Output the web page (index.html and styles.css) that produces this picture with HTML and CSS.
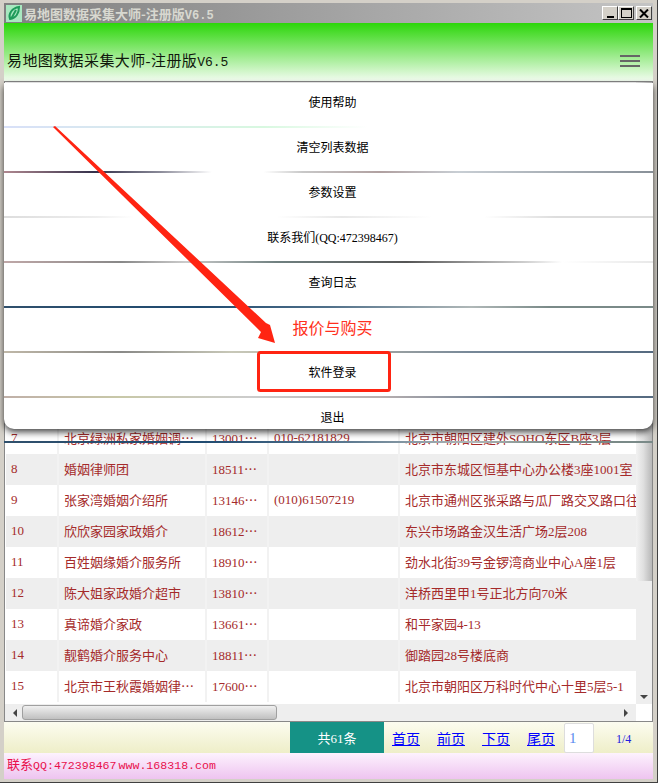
FILE: index.html
```html
<!DOCTYPE html>
<html lang="zh-CN">

<head>
    <meta charset="UTF-8">
    <title>易地图数据采集大师-注册版V6.5</title>
    <link rel="stylesheet" href="styles.css">
</head>

<body>
    <div class="window">
        <div class="titlebar">
            <svg class="app-icon" width="16" height="17" viewBox="0 0 16 17">
                <rect width="16" height="17" fill="#a8e8c0" />
                <path d="M4 14 C2 9 6 3 13 2 C13 8 10 13 4 14 Z M5 14 L10 5" fill="none" stroke="#1f9a5a" stroke-width="2" />
            </svg>
            <span class="title-text">易地图数据采集大师-注册版<span class="title-ver">V6.5</span></span>
            <div class="win-buttons">
                <button class="win-btn"><span class="glyph-min"></span></button>
                <button class="win-btn"><span class="glyph-max"></span></button>
                <button class="win-btn btn-close">
                    <svg width="10" height="9" viewBox="0 0 10 9">
                        <path d="M1 0.5 L9 8.5 M9 0.5 L1 8.5" stroke="#000" stroke-width="2" />
                    </svg>
                </button>
            </div>
        </div>

        <div class="app">
            <div class="app-header">
                <span class="app-title">易地图数据采集大师-注册版<span class="mono">V6.5</span></span>
                <div class="hamburger"><i></i><i></i><i></i></div>
            </div>

            <div class="grid">
                <div class="rows">
                    <table>
                        <colgroup>
                            <col class="c-no">
                            <col class="c-name">
                            <col class="c-phone">
                            <col class="c-tel">
                            <col class="c-addr">
                        </colgroup>
                        <tbody>
                            <tr><td>7</td><td>北京绿洲私家婚姻调⋯</td><td>13001⋯</td><td>010-62181829</td><td>北京市朝阳区建外SOHO东区B座3层</td></tr>
                            <tr><td>8</td><td>婚姻律师团</td><td>18511⋯</td><td></td><td>北京市东城区恒基中心办公楼3座1001室</td></tr>
                            <tr><td>9</td><td>张家湾婚姻介绍所</td><td>13146⋯</td><td>(010)61507219</td><td>北京市通州区张采路与瓜厂路交叉路口往</td></tr>
                            <tr><td>10</td><td>欣欣家园家政婚介</td><td>18612⋯</td><td></td><td>东兴市场路金汉生活广场2层208</td></tr>
                            <tr><td>11</td><td>百姓姻缘婚介服务所</td><td>18910⋯</td><td></td><td>劲水北街39号金锣湾商业中心A座1层</td></tr>
                            <tr><td>12</td><td>陈大姐家政婚介超市</td><td>13810⋯</td><td></td><td>洋桥西里甲1号正北方向70米</td></tr>
                            <tr><td>13</td><td>真谛婚介家政</td><td>13661⋯</td><td></td><td>和平家园4-13</td></tr>
                            <tr><td>14</td><td>靓鹤婚介服务中心</td><td>18811⋯</td><td></td><td>御踏园28号楼底商</td></tr>
                            <tr><td>15</td><td>北京市王秋霞婚姻律⋯</td><td>17600⋯</td><td></td><td>北京市朝阳区万科时代中心十里5层5-1</td></tr>
                        </tbody>
                    </table>
                </div>
                <div class="vbar">
                    <div class="vthumb"></div>
                    <span class="arrow-down"></span>
                </div>
                <div class="hbar">
                    <span class="arrow-left"></span>
                    <div class="hthumb"></div>
                    <span class="arrow-right"></span>
                </div>
                <div class="corner"></div>
            </div>

            <div class="pager">
                <div class="total">共61条</div>
                <a href="#">首页</a>
                <a href="#">前页</a>
                <a href="#">下页</a>
                <a href="#">尾页</a>
                <div class="page-input">1</div>
                <div class="page-count">1/4</div>
            </div>

            <div class="status">联系<span class="mono">QQ:472398467</span><span class="mono site">www.168318.com</span></div>

            <div class="menu">
                <div class="menu-item">使用帮助</div>
                <div class="sep sep-1"></div>
                <div class="menu-item">清空列表数据</div>
                <div class="sep sep-2"></div>
                <div class="menu-item">参数设置</div>
                <div class="sep sep-3"></div>
                <div class="menu-item">联系我们(QQ:472398467)</div>
                <div class="sep sep-4"></div>
                <div class="menu-item">查询日志</div>
                <div class="sep sep-5"></div>
                <div class="menu-item item-buy">报价与购买</div>
                <div class="sep sep-6"></div>
                <div class="menu-item">软件登录</div>
                <div class="sep sep-7"></div>
                <div class="menu-item">退出</div>
                <div class="sep sep-5"></div>
            </div>
        </div>

        <svg class="annotation" width="658" height="783" viewBox="0 0 658 783">
            <polygon points="53,127 55,126 266,323 270,325 275,343 258,338 261,332" fill="#ff2412" />
            <rect x="258.5" y="352.5" width="131" height="38" rx="2" fill="none" stroke="#ff2412" stroke-width="3" />
        </svg>
    </div>
</body>

</html>
```

FILE: styles.css
```css
* {
    box-sizing: border-box;
}

html,
body {
    margin: 0;
    height: 100%;
}

body {
    font-family: "Liberation Serif", "Noto Sans CJK SC", sans-serif;
    font-size: 13px;
    color: #000;
}

.mono {
    font-family: "Liberation Mono", "Noto Sans CJK SC", monospace;
}

.window {
    position: relative;
    width: 658px;
    height: 783px;
    display: flex;
    flex-direction: column;
    padding: 3px 4px 3px 4px;
    background-color: #d4d0c8;
    border-right: 1px solid #404040;
    border-bottom: 1px solid #404040;
}

.titlebar {
    height: 20px;
    flex: none;
    display: flex;
    align-items: center;
    padding-left: 2px;
    background: linear-gradient(to right, #808080, #c4c4c4);
}

.app-icon {
    flex: none;
}

.title-text {
    margin-left: 2px;
    font-weight: bold;
    color: #d8d8d0;
    font-family: "Noto Sans CJK SC", sans-serif;
}

.title-ver {
    font-family: "Liberation Mono", monospace;
    font-size: 12px;
}

.win-buttons {
    margin-left: auto;
    display: flex;
    margin-right: 1px;
}

.win-btn {
    width: 16px;
    height: 14px;
    padding: 0;
    display: flex;
    align-items: center;
    justify-content: center;
    background-color: #d4d0c8;
    border: 1px solid;
    border-color: #fff #404040 #404040 #fff;
}

.btn-close {
    margin-left: 2px;
}

.glyph-min {
    width: 7px;
    height: 2px;
    background-color: #000;
    margin-top: 7px;
}

.glyph-max {
    width: 11px;
    height: 10px;
    border: 1px solid #000;
    border-top-width: 2px;
}

.app {
    position: relative;
    flex: 1;
    min-height: 0;
    display: flex;
    flex-direction: column;
}

.app-header {
    height: 58px;
    flex: none;
    display: flex;
    align-items: flex-end;
    justify-content: space-between;
    padding: 0 13px 8px 3px;
    background: linear-gradient(to bottom, #2cd60a, #f2fcf0);
}

.app-title {
    font-size: 15px;
    line-height: 20px;
    letter-spacing: 0.4px;
    color: #10180c;
}

.app-title .mono {
    font-size: 13px;
    letter-spacing: 0;
}

.hamburger {
    width: 20px;
    display: flex;
    flex-direction: column;
    gap: 3px;
    margin-bottom: 6px;
}

.hamburger i {
    height: 2px;
    background-color: #666;
}

.grid {
    flex: 1;
    min-height: 0;
    display: grid;
    grid-template-columns: 1fr 16px;
    grid-template-rows: 1fr 17px;
    border: 1px solid #888;
    background-color: #fff;
}

.rows {
    min-height: 0;
    overflow: hidden;
    display: flex;
    flex-direction: column;
    justify-content: flex-end;
    padding: 0 0 2px 1px;
}

table {
    table-layout: fixed;
    width: 631px;
    border-collapse: collapse;
    color: #a52a2a;
}

.c-no {
    width: 52px;
}

.c-name {
    width: 148px;
}

.c-phone {
    width: 62px;
}

.c-tel {
    width: 131px;
}

.c-addr {
    width: 238px;
}

tr {
    height: 31px;
}

tr:nth-child(even) {
    background-color: #eee;
}

td {
    padding: 0 0 2px 5px;
    white-space: nowrap;
    overflow: hidden;
    border-right: 2px solid #f2f2f2;
}

td:last-child {
    border-right: none;
}

.vbar {
    background-color: #eee;
    display: flex;
    flex-direction: column;
    align-items: center;
    position: relative;
}

.vthumb {
    width: 100%;
    height: 499px;
    background: linear-gradient(to right, #f2f2f2, #e0e0e0 45%, #b8b8b8);
}

.arrow-down {
    margin-top: auto;
    margin-bottom: 5px;
    border-left: 4px solid transparent;
    border-right: 4px solid transparent;
    border-top: 4px solid #444;
}

.hbar {
    display: flex;
    align-items: center;
    background-color: #eee;
}

.arrow-left {
    margin-left: 8px;
    border-top: 4px solid transparent;
    border-bottom: 4px solid transparent;
    border-right: 4px solid #444;
}

.hthumb {
    width: 255px;
    height: 15px;
    margin-left: 5px;
    border: 1px solid #a0a0a0;
    border-radius: 3px;
    background: linear-gradient(to bottom, #f0f0f0, #c0c0c0);
}

.arrow-right {
    margin-left: auto;
    margin-right: 8px;
    border-top: 4px solid transparent;
    border-bottom: 4px solid transparent;
    border-left: 4px solid #444;
}

.pager {
    height: 31px;
    flex: none;
    display: flex;
    align-items: center;
    background: linear-gradient(to bottom, #fcfcf0, #eeeec8);
}

.total {
    width: 94px;
    height: 100%;
    margin-left: 286px;
    margin-right: 8px;
    display: flex;
    align-items: center;
    justify-content: center;
    color: #fff;
    background-color: #159286;
}

.pager a {
    width: 29px;
    margin-right: 16px;
    font-size: 14px;
    color: #00f;
}

.pager a:nth-of-type(4) {
    margin-right: 8px;
}

.page-input {
    width: 30px;
    height: 30px;
    padding-left: 4px;
    line-height: 28px;
    font-size: 15px;
    color: #5a8cf0;
    background-color: #fff;
    border: 1px solid #ddd;
    border-radius: 2px;
}

.page-count {
    margin-left: 22px;
    padding-top: 3px;
    font-size: 12px;
    color: #2020e0;
}

.status {
    height: 26px;
    flex: none;
    padding-left: 3px;
    line-height: 24px;
    font-size: 13px;
    color: #e8104c;
    background: linear-gradient(to bottom, #fdf2fd, #eec4f0);
}

.status .mono {
    font-size: 11.6px;
}

.status .site {
    margin-left: 2px;
}

.menu {
    position: absolute;
    top: 60px;
    left: 0;
    right: 0;
    height: 346px;
    display: flex;
    flex-direction: column;
    font-size: 12px;
    background-color: #fff;
    border-radius: 0 0 10px 10px;
    box-shadow: 0 3px 7px rgba(0, 0, 0, 0.75);
}

.menu-item {
    height: 43px;
    flex: none;
    display: flex;
    align-items: center;
    justify-content: center;
    padding: 0 0 5px 8px;
}

.item-buy {
    font-size: 16px;
    color: #ff3020;
}

.sep {
    height: 2px;
    flex: none;
}

.sep-1 {
    background: linear-gradient(to right, #d8e0f8, #d8e8f0 15%, #d8f8e0 40%, #fff 56%);
}

.sep-2 {
    background: linear-gradient(to right, #b08890, #33304a 14%, #8a8a98 24%, #fff 32%, #fff 40%, #c8c8c8 46%, #b0a0a0 58%, #c8ced4 70%, #889098 100%);
}

.sep-3 {
    background: linear-gradient(to right, #ddd, #eee 14%, #fff 20%, #fff 42%, #e8e8e8 52%, #fff 66%, #fff 74%, #ddd 85%, #ddd);
}

.sep-4 {
    background: linear-gradient(to right, #c0a8a8, #888 18%, #ccc 28%, #708080 42%, #555 62%, #ccc 80%, #fff 86%, #e8e8e8 100%);
}

.sep-5 {
    background: linear-gradient(to right, #30506c, #1f4a70 30%, #50708a 50%, #b0b8b8 72%, #7a8a88 84%, #7a8a88);
}

.sep-6 {
    background: linear-gradient(to right, #c0b8a8, #8a8a88 18%, #c8c8b8 35%, #b0b0a8 52%, #778898 72%, #556a80 100%);
}

.sep-7 {
    background: linear-gradient(to right, #c0b0a8, #c8c8a8 18%, #ccc 38%, #b8b0b0 58%, #667a90 78%, #556a80 100%);
}

.annotation {
    position: absolute;
    top: 0;
    left: 0;
    pointer-events: none;
}
```
